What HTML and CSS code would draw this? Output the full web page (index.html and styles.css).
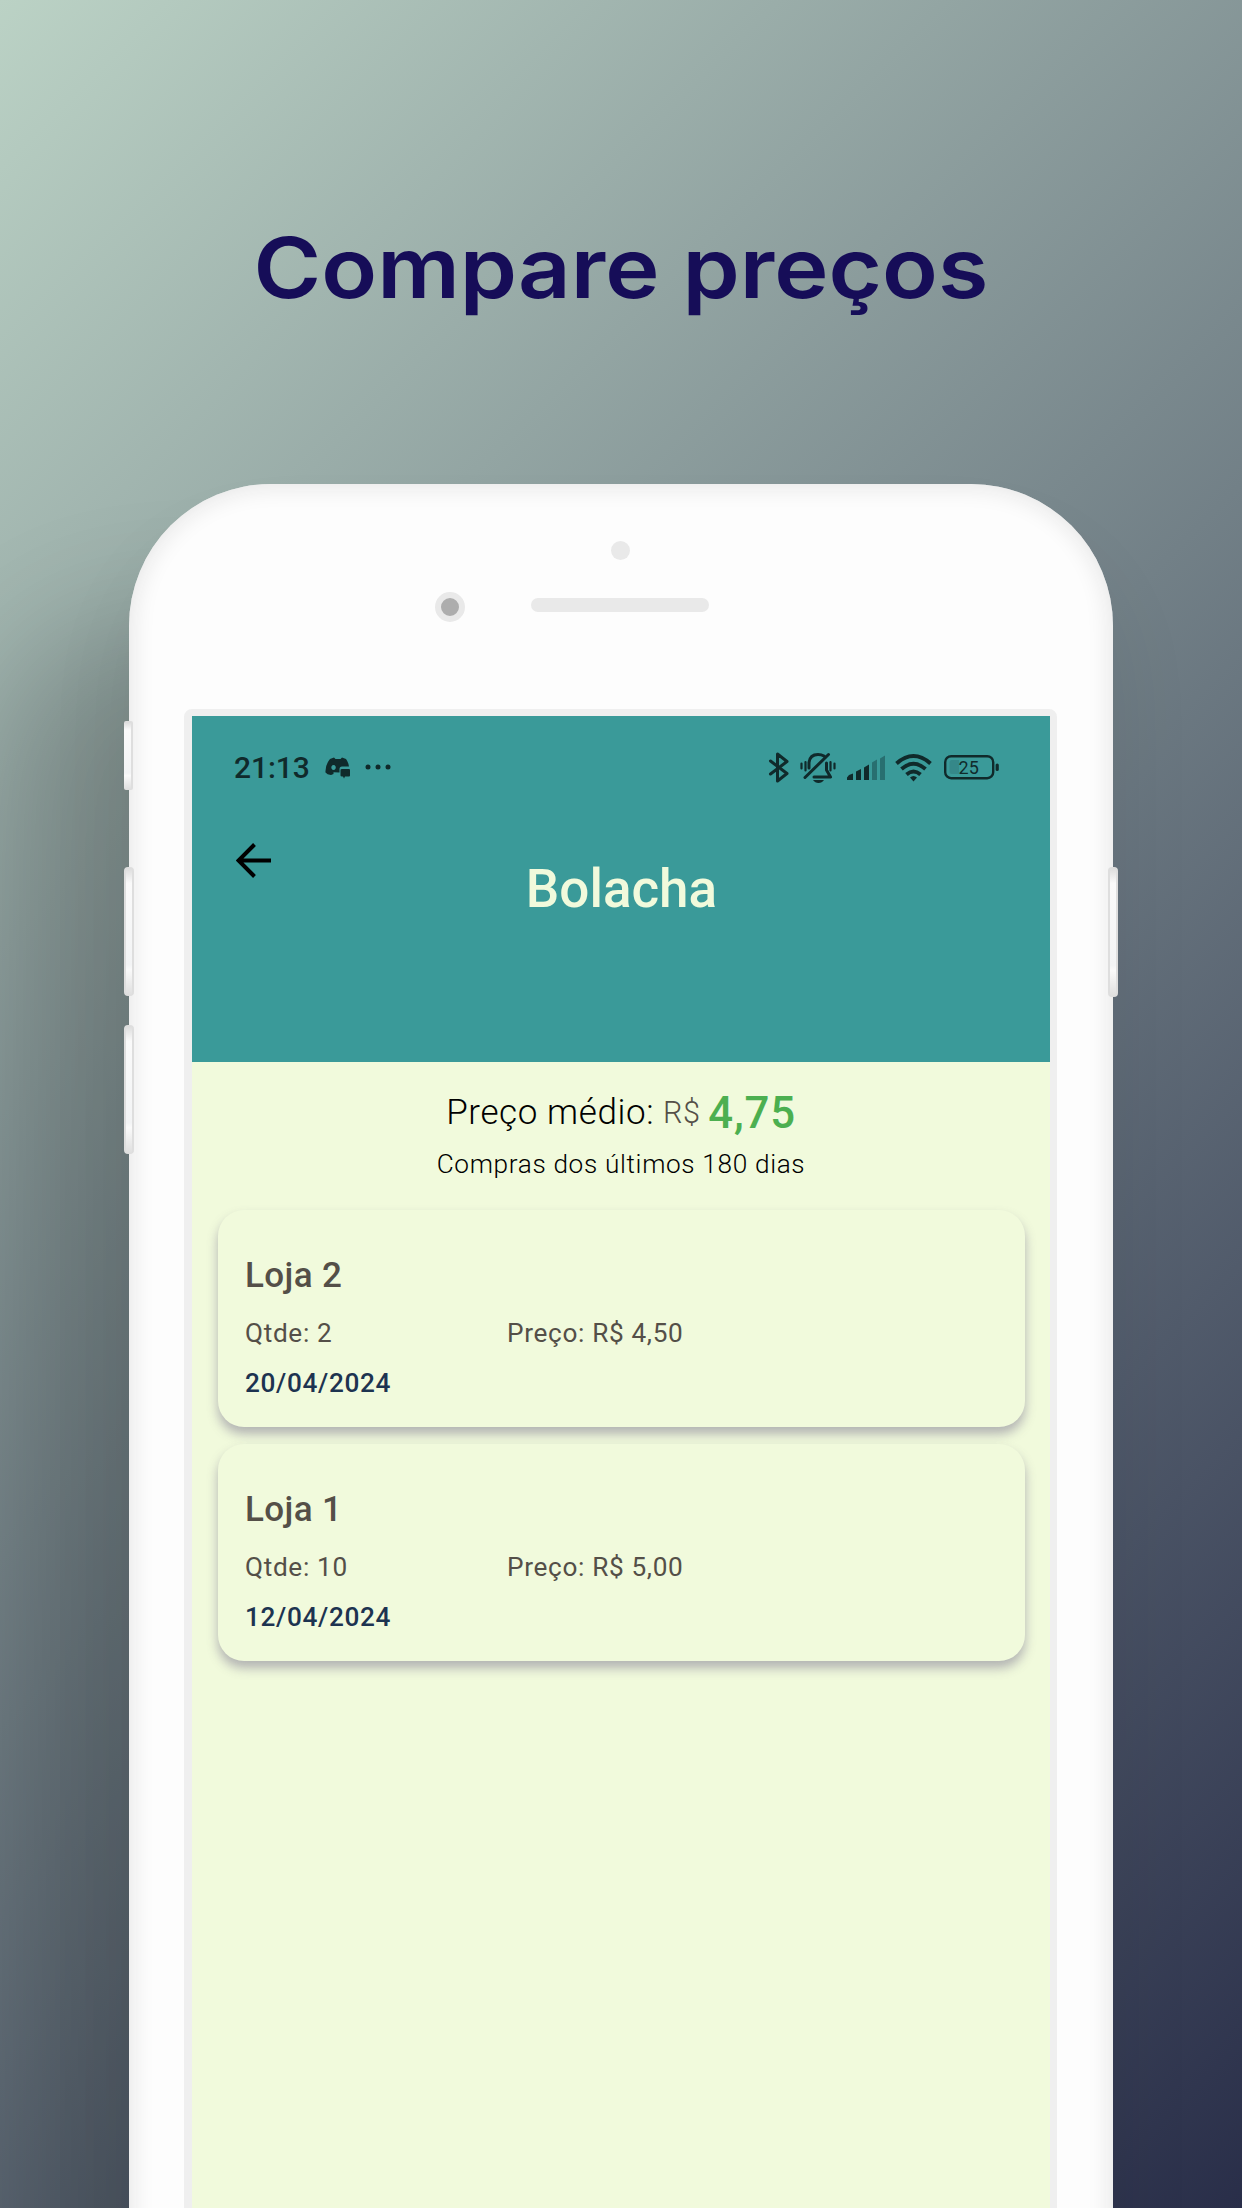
FILE: index.html
```html
<!DOCTYPE html>
<html lang="pt-BR">
<head>
<meta charset="utf-8">
<title>Compare preços</title>
<link rel="stylesheet" href="styles.css">
</head>
<body>
<main class="poster">
  <h1 class="headline">Compare preços</h1>
  <section class="phone">
    <span class="key key-mute"></span>
    <span class="key key-up"></span>
    <span class="key key-down"></span>
    <span class="key key-power"></span>
    <div class="sensor"></div>
    <div class="ear"><span class="camera"></span><span class="speaker"></span></div>
    <div class="screen">
      <header class="appbar">
        <div class="status">
          <span class="clock">21:13</span>
          <svg class="discord" width="26" height="22" viewBox="0 0 26 22"><path fill="#102a2b" fill-rule="evenodd" d="M5 2 9 .5 10.500 2h5L17 .5 21 2q2.500 3.500 3 7.500H17q-2.500 0-2.500 2.500v3.500l-6-.2L8.500 17 6 18Q2 17.500.5 15.500 0 8 5 2ZM8.500 8a2.200 2.500 0 1 0 .1 0Z"/><path fill="#102a2b" d="M17 12h7q1 0 1 1v5.500q0 1-1 1h-4l-1 2-1-2h-1q-1.500 0-1.500-1V13q0-1 1.500-1Z"/></svg>
          <svg class="dots" width="26" height="6" viewBox="0 0 26 6" fill="#102a2b"><circle cx="3" cy="3" r="2.500"/><circle cx="13" cy="3" r="2.500"/><circle cx="23" cy="3" r="2.500"/></svg>
          <svg class="tray" width="236" height="36" viewBox="764 750 236 36" fill="none" stroke="#102a2b">
            <path stroke-width="3" stroke-linejoin="round" stroke-linecap="round" d="m770.500 761 16.500 12.500-9.500 7.500v-27l9.500 7.500-16.500 12.500"/>
            <path stroke-width="3" stroke-linecap="round" stroke-linejoin="round" d="M805 777.500 828.500 754.500M809 768v-5.500q1-8 9-8 3.500 0 6 1.500M826.500 763v7l4 7H814"/>
            <path stroke-width="2.200" stroke-linecap="round" d="M801.500 763.500v5M805.500 762v8.500M830.500 762v8.500M834.500 763.500v5"/>
            <path fill="#102a2b" stroke="none" d="M813 780h11q-2 3-5.500 3t-5.500-3Z"/>
            <g stroke="none" fill="#102a2b"><path d="M847 780v-2.500l2-2.500 4-1.500V780ZM856 780v-8.500l5-2.500v11ZM864 780v-12.500l5-3V780Z"/><path fill="#286f70" d="M872 780v-17.500l5-3V780ZM880 780v-21.500l5-3V780Z"/></g>
            <path stroke-width="3.900" d="M896.500 763.500q17-15 34 0M901.500 769q12-10.500 24 0M906.500 774.500q7-6 14 0"/>
            <path fill="#102a2b" stroke="none" d="M910 777.500q3.500-3 7 0l-3.500 4Z"/>
            <rect x="945.200" y="756.200" width="48" height="22" rx="6" stroke-width="2.400"/>
            <path fill="#358889" stroke="none" d="M952 760h7v14h-7q-2.500 0-2.500-2.500v-9q0-2.500 2.500-2.500Z"/>
            <path stroke-width="3.200" stroke-linecap="round" d="M997.200 765v4.500"/>
            <text class="charge" x="968.700" y="774.300" text-anchor="middle">25</text>
          </svg>
        </div>
        <svg class="back" width="36" height="36" viewBox="0 0 36 36" fill="none" stroke="#000" stroke-width="4"><path d="M35 17.500H3M18.500 1.500 2.500 17.500l16 16"/></svg>
        <h2 class="title">Bolacha</h2>
      </header>
      <div class="average"><span class="label">Preço médio:</span><span class="currency">R$</span><strong class="amount">4,75</strong></div>
      <p class="period">Compras dos últimos 180 dias</p>
      <div class="list">
        <article class="card">
          <h3 class="store">Loja 2</h3>
          <div class="facts"><span>Qtde: 2</span><span>Preço: R$ 4,50</span></div>
          <time class="date">20/04/2024</time>
        </article>
        <article class="card">
          <h3 class="store">Loja 1</h3>
          <div class="facts"><span>Qtde: 10</span><span>Preço: R$ 5,00</span></div>
          <time class="date">12/04/2024</time>
        </article>
      </div>
    </div>
  </section>
</main>
</body>
</html>
```
FILE: styles.css
```css
* { box-sizing: border-box; }
body { margin: 0; }
h1, h2, h3, p { margin: 0; }
.poster {
  width: 1242px;
  height: 2208px;
  overflow: hidden;
  font-family: Roboto, sans-serif;
  background: linear-gradient(135deg, #bbd2c5, #292e49);
}
.headline {
  height: 484px;
  padding-top: 217px;
  font: 600 84px/102px Inter, sans-serif;
  text-align: center;
  color: #160d58;
  transform: scaleX(1.093);
}
.phone {
  position: relative;
  width: 984px;
  height: 1900px;
  margin-left: 129px;
  border-radius: 142px 142px 0 0;
  background: #fdfdfd;
  box-shadow: inset 0 0 24px 2px #e4e4e4, 0 60px 90px rgba(0, 0, 0, .07), -130px 140px 130px rgba(0, 0, 0, .19);
}
.key {
  position: absolute;
  left: -5px;
  width: 10px;
  height: 129px;
  border-radius: 4px;
  border: solid #dedede;
  border-width: 1px 2px;
  background: linear-gradient(#dcdcdc, #fafafa 12%, #f3f4f5 76%, #fafafa 80%, #dfdfdf);
}
.key-mute { top: 237px; width: 9px; height: 69px; border-left-width: 0; border-radius: 2px; }
.key-up { top: 383px; }
.key-down { top: 541px; }
.key-power { top: 383px; left: 979px; height: 130px; }
.sensor {
  width: 19px;
  height: 19px;
  margin: 0 auto;
  border-radius: 50%;
  background: #e9e9e9;
  transform: translate(-1px, 57px);
}
.ear {
  display: flex;
  align-items: center;
  gap: 66px;
  height: 30px;
  margin: 89px 0 0 306px;
}
.camera {
  width: 30px;
  height: 30px;
  margin-top: -1px;
  border: 6.5px solid #e9e9e9;
  border-radius: 50%;
  background: #adadad;
}
.speaker {
  width: 178px;
  height: 14px;
  margin-top: -5px;
  border-radius: 7px;
  background: #e9e9e9;
}
.screen {
  width: 873px;
  height: 1600px;
  margin: 87px 0 0 55px;
  border: 7px solid #efefef;
  border-left-width: 8px;
  border-radius: 8px;
  background: #f1fadc;
}
.appbar {
  height: 346px;
  padding: 34px 43px 0 42px;
  background: #3a9a99;
}
.status { display: flex; align-items: center; height: 36px; }
.clock {
  width: 91px;
  font-size: 30px;
  font-weight: 500;
  letter-spacing: -.1px;
  line-height: 38px;
  color: #102a2b;
}
.dots { margin-left: 14px; margin-top: -2px; }
.tray { margin-left: auto; margin-right: 7px; }
.charge { font: 18px Roboto, sans-serif; fill: #102a2b; stroke: none; }
.back { display: block; margin: 57px 0 0 2px; }
.title {
  margin-top: -21px;
  padding-left: 2px;
  font-weight: 500;
  font-size: 53px;
  line-height: 62px;
  text-align: center;
  color: #f1fadc;
}
.average {
  display: flex;
  justify-content: center;
  align-items: center;
  height: 76px;
  padding-top: 26px;
  line-height: 50px;
}
.label { font-size: 35px; font-weight: 300; letter-spacing: .6px; color: #000; }
.currency { margin-left: 9px; font-size: 30.600px; font-weight: 300; letter-spacing: .4px; color: #544f48; }
.amount { margin-left: 8px; font-size: 43.700px; font-weight: 500; letter-spacing: .8px; color: #4caf50; }
.period {
  margin-top: 10px;
  font-size: 26.200px;
  font-weight: 300;
  letter-spacing: .66px;
  line-height: 32px;
  text-align: center;
  color: #000;
}
.list { display: grid; gap: 17px; margin-top: 30px; padding: 0 25px 0 26px; }
.card {
  display: flex;
  flex-direction: column;
  height: 217px;
  padding: 44px 27px 0;
  border-radius: 26px;
  background: #f1fadc;
  box-shadow: 0 7px 11px rgba(105, 95, 130, .46);
  color: #544f48;
}
.store { font-size: 35px; font-weight: 500; letter-spacing: .4px; line-height: 44px; }
.facts {
  display: grid;
  grid-template-columns: 262px 1fr;
  margin-top: 19px;
  font-size: 26.200px;
  letter-spacing: .66px;
  line-height: 32px;
}
.date {
  margin-top: 18px;
  font-size: 26.200px;
  font-weight: 500;
  letter-spacing: .66px;
  line-height: 32px;
  color: #1d3350;
}
```
